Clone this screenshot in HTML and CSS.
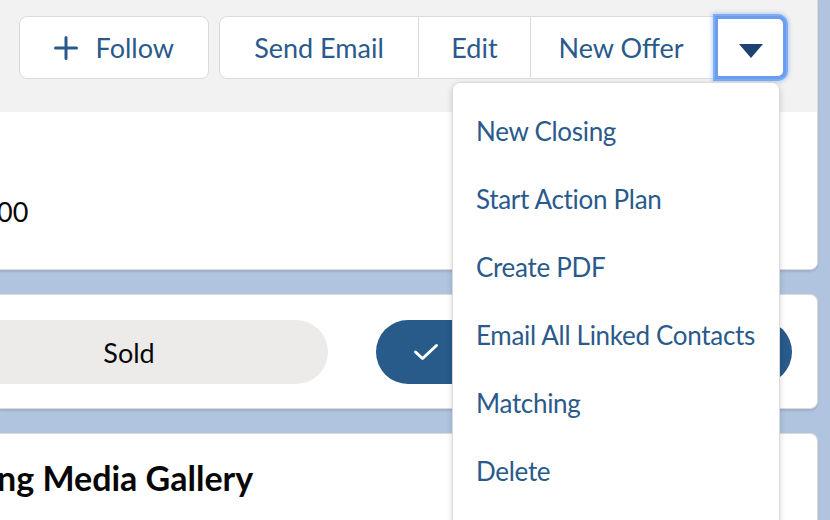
FILE: index.html
```html
<!DOCTYPE html>
<html lang="en">
<head>
<meta charset="utf-8">
<title>Listing</title>
<link rel="stylesheet" href="styles.css">
</head>
<body>
<div class="page">
  <section class="card header-card">
    <div class="header-top">
      <div class="actions">
        <button class="btn follow-btn">
          <svg class="plus" viewBox="0 0 24 24" width="24" height="24"><path d="M12 1.5v21M1.5 12h21"/></svg>
          <span>Follow</span>
        </button>
        <div class="btn-group">
          <button class="btn group-btn btn-email">Send Email</button>
          <button class="btn group-btn btn-edit">Edit</button>
          <button class="btn group-btn btn-offer">New Offer</button>
          <button class="btn group-btn menu-trigger" aria-label="Show more actions">
            <svg viewBox="0 0 24 14" width="24" height="14"><polygon points="0,0 24,0 12,14"/></svg>
          </button>
        </div>
      </div>
    </div>
    <div class="header-body">
      <span class="amount">00</span>
    </div>
  </section>

  <section class="card path-card">
    <div class="path">
      <div class="step step-done">Sold</div>
      <div class="step step-current">
        <svg viewBox="0 0 26 18" width="26" height="18"><polyline points="2.5,9 9.5,15.5 23.5,2.5"/></svg>
      </div>
    </div>
  </section>

  <section class="card gallery-card">
    <h2 class="gallery-title">ng Media Gallery</h2>
  </section>
</div>

<div class="dropdown">
  <ul class="menu">
    <li class="menu-item">New Closing</li>
    <li class="menu-item">Start Action Plan</li>
    <li class="menu-item">Create PDF</li>
    <li class="menu-item">Email All Linked Contacts</li>
    <li class="menu-item">Matching</li>
    <li class="menu-item">Delete</li>
  </ul>
</div>
</body>
</html>
```

FILE: styles.css
```css
* { box-sizing: border-box; }

html, body {
  margin: 0;
  width: 830px;
  height: 520px;
  overflow: hidden;
}

body {
  background: #b0c4df;
  font-family: Lato, "Liberation Sans", sans-serif;
  color: #080707;
  position: relative;
}

.page {
  display: flex;
  flex-direction: column;
  gap: 24px;
  padding-right: 12px;
}

.card {
  background: #fff;
  border: 1px solid #dddbda;
  border-left: none;
  border-radius: 0 8px 8px 0;
  box-shadow: 0 2px 2px rgba(0, 0, 0, 0.10);
}

/* header card */
.header-card {
  border-top: none;
  border-radius: 0 0 8px 0;
  height: 270px;
  display: flex;
  flex-direction: column;
  overflow: hidden;
}

.header-top {
  background: #f3f2f2;
  height: 112px;
  padding: 16px 31px 0 0;
}

.actions {
  display: flex;
  justify-content: flex-end;
  gap: 10px;
}

.btn {
  font-family: inherit;
  font-size: 27px;
  color: #2a5a8b;
  background: #fff;
  border: 1px solid #dddbda;
  height: 63px;
  padding: 0 32px;
  display: flex;
  align-items: center;
  justify-content: center;
  cursor: pointer;
}

.follow-btn {
  border-radius: 8px;
  padding: 0 34px;
  gap: 18px;
}

.plus {
  fill: none;
  stroke: #2a5a8b;
  stroke-width: 3;
  stroke-linecap: round;
}

.btn-group {
  display: flex;
}

.group-btn {
  border-radius: 0;
  margin-left: -1px;
  padding: 0;
}

.group-btn:first-child {
  border-radius: 8px 0 0 8px;
  margin-left: 0;
}

.btn-email { width: 200px; }
.btn-edit { width: 113px; }
.btn-offer { width: 186px; padding-right: 4px; }

.menu-trigger {
  border-radius: 0 8px 8px 0;
  width: 71px;
  border: 3px solid #6a9df0;
  box-shadow: 0 0 0 2px rgba(106, 157, 240, 0.75), 0 0 4px 3px rgba(106, 157, 240, 0.45);
  position: relative;
  z-index: 1;
}

.menu-trigger svg {
  fill: #1d426f;
  margin-top: 6px;
}

.header-body {
  flex: 1;
  background: #fff;
  display: flex;
  align-items: center;
}

.amount {
  font-size: 27px;
  margin-left: -3px;
  margin-top: 42px;
}

/* path */
.path-card {
  padding: 25px 25px 24px 0;
}

.path {
  display: flex;
  gap: 48px;
  height: 64px;
}

.step {
  height: 64px;
  display: flex;
  align-items: center;
}

.step-done {
  width: 328px;
  background: #ecebea;
  border-radius: 0 32px 32px 0;
  justify-content: center;
  padding-right: 70px;
  font-size: 27px;
  color: #080707;
}

.step-current {
  flex: 1;
  background: #285a8a;
  border-radius: 32px;
  padding-left: 37px;
}

.step-current svg {
  fill: none;
  stroke: #fff;
  stroke-width: 3;
  stroke-linecap: round;
  stroke-linejoin: round;
}

/* gallery */
.gallery-card {
  height: 200px;
  padding: 23px 0 0 0;
}

.gallery-title {
  margin: 0;
  font-size: 34px;
  font-weight: 700;
  color: #080707;
  margin-left: -3px;
}

/* dropdown */
.dropdown {
  position: absolute;
  left: 452px;
  top: 82px;
  width: 328px;
  height: 460px;
  background: #fff;
  border: 1px solid #dddbda;
  border-radius: 8px;
  box-shadow: 0 2px 6px rgba(0, 0, 0, 0.16);
  z-index: 5;
}

.menu {
  list-style: none;
  margin: 0;
  padding: 14px 0 0;
}

.menu-item {
  font-size: 26px;
  letter-spacing: -0.3px;
  line-height: 68px;
  height: 68px;
  padding: 0 23px;
  color: #2a5a8b;
  white-space: nowrap;
}
```
